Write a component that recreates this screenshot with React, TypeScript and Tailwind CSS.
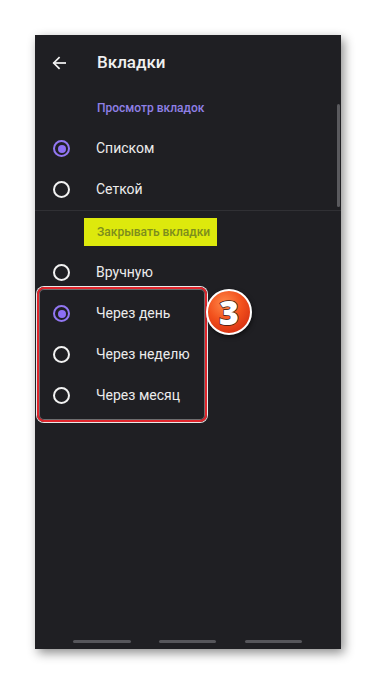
import React from "react";

function Radio({ checked }: { checked?: boolean }) {
  if (checked) {
    return (
      <span className="flex h-[17px] w-[17px] items-center justify-center rounded-full border-2 border-[#9277f2]">
        <span className="h-[8px] w-[8px] rounded-full bg-[#8d6ff4]" />
      </span>
    );
  }
  return <span className="block h-[17px] w-[17px] rounded-full border-2 border-[#f2f2f2]" />;
}

function Row({ label, checked }: { label: string; checked?: boolean }) {
  return (
    <div className="flex h-[41px] items-center pl-[18px]">
      <Radio checked={checked} />
      <span className="ml-[26px] text-[14px] text-[#ececec]">{label}</span>
    </div>
  );
}

export default function App() {
  return (
    <div className="min-h-[684px] w-[376px] bg-white pl-[35px] pt-[35px]" style={{ fontFamily: "Roboto, 'Noto Sans', sans-serif" }}>
      <div className="relative h-[614px] w-[306px] bg-[#1f1f23] shadow-[3px_4px_10px_rgba(0,0,0,0.45)]">
        {/* header */}
        <div className="flex h-[56px] items-center pl-[17px]">
          <svg width="14" height="14" viewBox="0 0 16 16" fill="none" stroke="#f2f2f2" strokeWidth="2" strokeLinecap="square">
            <path d="M15 8H2.5" />
            <path d="M8 2L2 8l6 6" />
          </svg>
          <span className="ml-[31px] text-[17px] font-medium text-[#f0f0f0]">Вкладки</span>
        </div>
        <div className="flex h-[37px] items-center pl-[62px] pb-[4px]">
          <span className="text-[12px] font-medium text-[#8f80e6]">Просмотр вкладок</span>
        </div>
        <Row label="Списком" checked />
        <Row label="Сеткой" />
        <div className="h-[1px] bg-[#303034]" />
        <div className="flex h-[41px] items-center pl-[49px]">
          <div className="flex h-[28px] w-[133px] items-center bg-[#dde90c] pl-[13px]">
            <span className="whitespace-nowrap text-[12px] font-medium text-[#7c8d1d]">Закрывать вкладки</span>
          </div>
        </div>
        <Row label="Вручную" />
        <Row label="Через день" checked />
        <Row label="Через неделю" />
        <Row label="Через месяц" />

        {/* scrollbar */}
        <div className="absolute right-[1px] top-[69px] h-[103px] w-[3px] rounded-sm bg-[#5a5a5e]" />

        {/* bottom nav lines */}
        <div className="absolute bottom-[6px] left-0 flex w-full">
          <div className="ml-[38px] h-[3px] w-[58px] rounded-full bg-[#56565b]" />
          <div className="ml-[28px] h-[3px] w-[57px] rounded-full bg-[#56565b]" />
          <div className="ml-[29px] h-[3px] w-[57px] rounded-full bg-[#56565b]" />
        </div>

        {/* red highlight frame */}
        <div className="absolute left-[2px] top-[252px] h-[135px] w-[170px] rounded-[7px] border-2 border-[#e0252c] shadow-[0_0_0_1px_rgba(255,255,255,0.9),inset_0_0_0_1px_rgba(255,255,255,0.35)]" />

        {/* badge 3 */}
        <div className="absolute left-[171px] top-[254px] flex h-[46px] w-[46px] items-center justify-center rounded-full border-2 border-white bg-[radial-gradient(circle_at_40%_30%,#ff8a4a_0%,#f2501c_45%,#c9210d_100%)] shadow-[1px_2px_4px_rgba(0,0,0,0.5)]">
          <span
            className="text-[34px] font-black leading-none text-white"
            style={{ fontFamily: "'Open Sans', 'DejaVu Sans', sans-serif", WebkitTextStroke: "1.5px #3a1a10", paintOrder: "stroke fill" }}
          >
            3
          </span>
        </div>
      </div>
    </div>
  );
}
